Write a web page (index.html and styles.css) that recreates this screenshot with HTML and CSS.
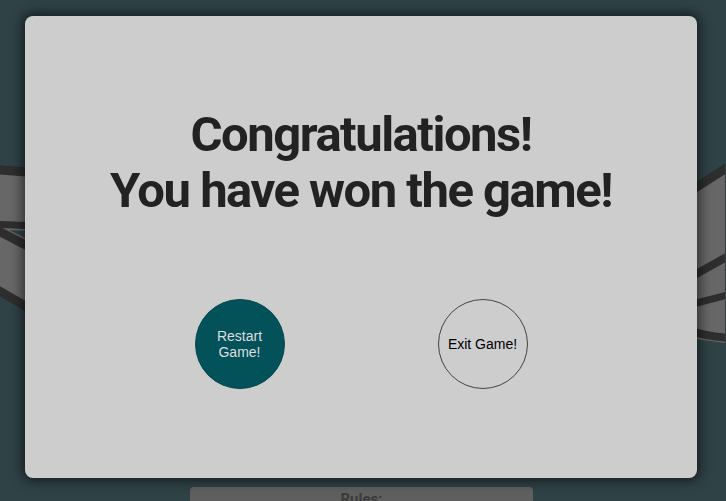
FILE: index.html
```html
<!DOCTYPE html>
<html>
<head>
<meta charset="utf-8">
<link rel="stylesheet" href="styles.css">
</head>
<body>
<main class="page">
  <svg class="board" width="726" height="487" viewBox="0 0 726 487">
    <polygon points="-10,172 40,174 40,310 -10,290" fill="#676767"/>
    <line x1="-10" y1="169" x2="40" y2="173" stroke="#2e2e2e" stroke-width="9"/>
    <line x1="-10" y1="224" x2="40" y2="226" stroke="#2e2e2e" stroke-width="7"/>
    <line x1="-10" y1="226" x2="40" y2="252" stroke="#2e2e2e" stroke-width="9"/>
    <polygon points="10,230 30,231 30,240" fill="#2f4246"/>
    <line x1="-10" y1="285" x2="40" y2="314" stroke="#2e2e2e" stroke-width="9"/>

    <polygon points="690,190 740,160 740,345 690,338" fill="#676767"/>
    <line x1="690" y1="192" x2="740" y2="160" stroke="#2e2e2e" stroke-width="9"/>
    <line x1="690" y1="278" x2="740" y2="250" stroke="#2e2e2e" stroke-width="8"/>
    <line x1="690" y1="305" x2="740" y2="292" stroke="#2e2e2e" stroke-width="7"/>
    <path d="M690,330 Q710,338 740,338" stroke="#2e2e2e" stroke-width="8" fill="none"/>
  </svg>
  <section class="rules">
    <h2 class="rules-title">Rules:</h2>
  </section>
</main>

<div class="modal">
  <h1 class="modal-title">Congratulations!<br>You have won the game!</h1>
  <div class="modal-actions">
    <button class="btn btn-restart">Restart<br>Game!</button>
    <button class="btn btn-exit">Exit Game!</button>
  </div>
</div>
</body>
</html>
```

FILE: styles.css
```css
html, body {
  margin: 0;
  padding: 0;
  width: 726px;
  height: 501px;
  overflow: hidden;
  background: #2f4246;
  font-family: "Liberation Sans", Arial, sans-serif;
}

.page {
  display: flex;
  flex-direction: column;
  align-items: center;
  padding-right: 3px;
}

.board {
  display: block;
}

.rules {
  width: 343px;
  height: 60px;
  background: #5f5f5f;
  border-radius: 4px;
  box-sizing: border-box;
  padding-top: 3px;
}

.rules-title {
  margin: 0;
  text-align: center;
  font-family: Roboto, sans-serif;
  font-weight: 700;
  font-size: 15px;
  color: #3b3b3b;
}

.modal {
  position: absolute;
  left: 25px;
  top: 16px;
  width: 672px;
  height: 462px;
  box-sizing: border-box;
  padding-top: 91px;
  background: #cdcdcd;
  border-radius: 8px;
  box-shadow: 0 0 12px 3px rgba(0, 0, 0, 0.55);
  display: flex;
  flex-direction: column;
  align-items: center;
}

.modal-title {
  margin: 0;
  font-family: Roboto, sans-serif;
  font-weight: 700;
  font-size: 49px;
  letter-spacing: -1.5px;
  line-height: 56px;
  color: #222222;
  text-align: center;
}

.modal-actions {
  margin-top: 80px;
  display: flex;
  gap: 153px;
}

.btn {
  width: 90px;
  height: 90px;
  border-radius: 50%;
  box-sizing: border-box;
  font-family: "Liberation Sans", Arial, sans-serif;
  font-size: 14px;
  line-height: 16px;
  padding: 0;
  cursor: pointer;
}

.btn-restart {
  background: #03525a;
  border: 1px solid #02474e;
  color: #dddddd;
}

.btn-exit {
  background: transparent;
  border: 1px solid #444444;
  color: #000000;
}
```
